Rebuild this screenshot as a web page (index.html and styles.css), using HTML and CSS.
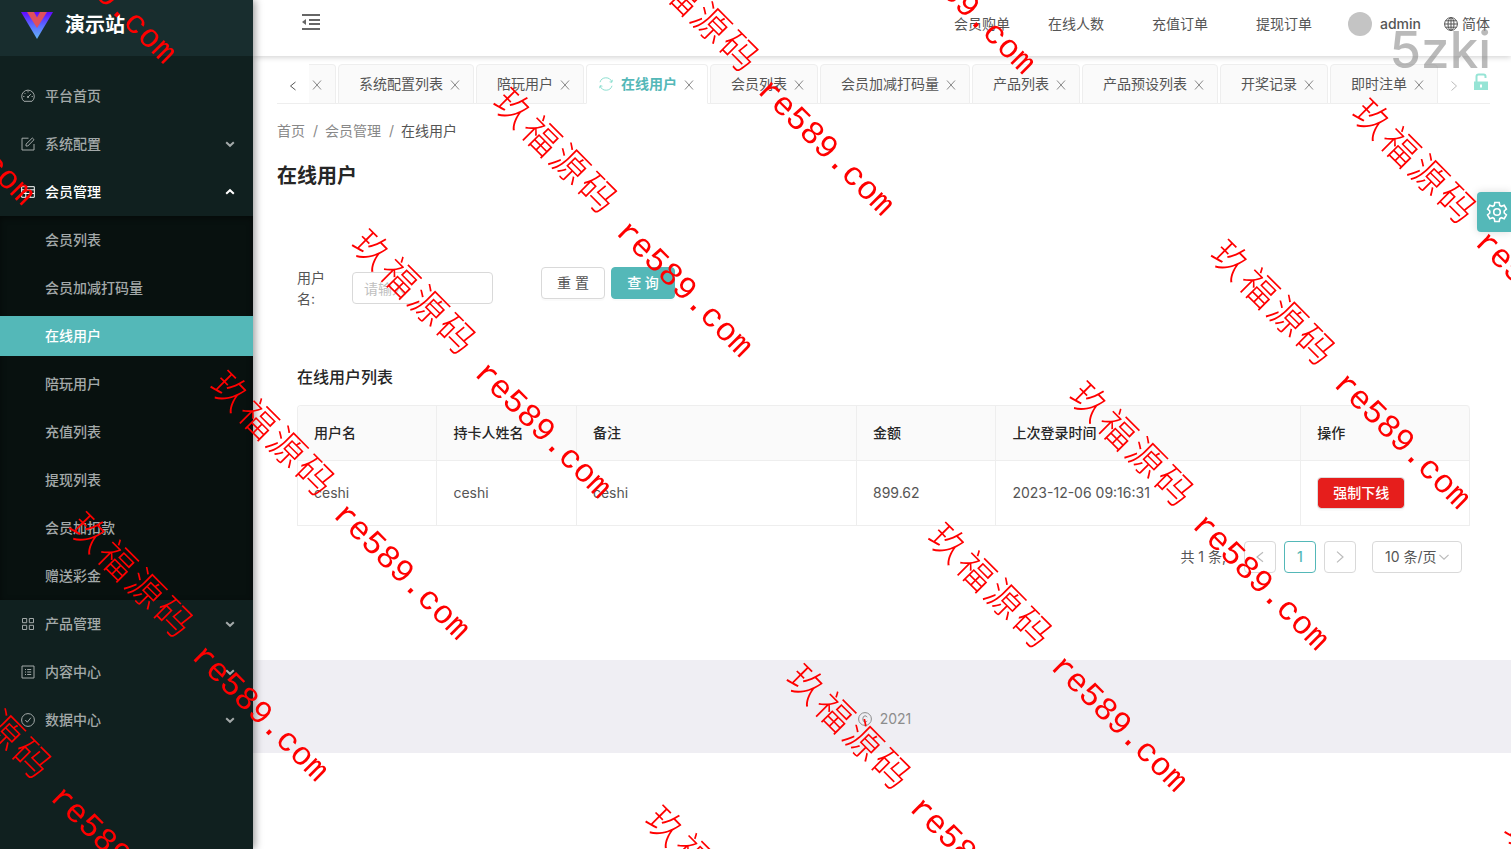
FILE: index.html
```html
<!DOCTYPE html>
<html lang="zh-CN">
<head>
    <meta charset="UTF-8">
    <meta name="viewport" content="width=device-width, initial-scale=1.0">
    <title>在线用户 - 演示站</title>
    <link rel="stylesheet" href="styles.css">
</head>
<body>
    <!-- Shared icons -->
    <svg class="icon-defs" width="0" height="0">
        <symbol id="i-close" viewBox="0 0 10 10"><path d="M1 .5l8 9M9 .5l-8 9"/></symbol>
        <symbol id="i-left" viewBox="0 0 10 10"><path d="M7.500 1L2.500 5l5 4"/></symbol>
        <symbol id="i-right" viewBox="0 0 10 10"><path d="M2.500 0.500L7.500 5l-5 4.500"/></symbol>
        <symbol id="i-down" viewBox="0 0 10 10"><path d="M1.200 3.200L5 6.800l3.800-3.600"/></symbol>
    </svg>

    <div class="layout">
        <!-- Sidebar -->
        <aside class="sidebar">
            <a class="logo" href="#">
                <svg class="logo-img" viewBox="0 0 32 32">
                    <defs>
                        <linearGradient id="lg" x1="0" y1="0" x2="0" y2="1">
                            <stop offset="0" stop-color="#6207ff"/>
                            <stop offset="0.5" stop-color="#5a6cff"/>
                            <stop offset="1" stop-color="#64b5f6"/>
                        </linearGradient>
                    </defs>
                    <path fill="url(#lg)" d="M0 3h32L16 30z"/>
                    <path fill="#e0505c" d="M6 3h7l3 5.500L19 3h7L16 19z"/>
                </svg>
                <span>演示站</span>
            </a>
            <nav>
                <ul class="menu">
                    <li><a class="menu-item" href="#">
                        <svg class="menu-icon" viewBox="0 0 14 14"><path d="M3 12.300a6.300 6.300 0 1 1 8 0zM7 8l2.800-2.800M7 2.200v1.200M2.200 7.500h1.200M10.600 7.500h1.200M3.500 4l.9.900"/><circle cx="7" cy="8" r=".7"/></svg>
                        <span>平台首页</span></a></li>
                    <li><a class="menu-item" href="#">
                        <svg class="menu-icon" viewBox="0 0 14 14"><path d="M7.500 1.200H1v11.800h12V7M5 9V7.200L11.300 1l1.700 1.700L6.800 9z"/></svg>
                        <span>系统配置</span>
                        <svg class="arrow" viewBox="0 0 10 10"><use href="#i-down"/></svg></a></li>
                    <li><a class="menu-item open" href="#">
                        <svg class="menu-icon" viewBox="0 0 14 14"><path d="M.7 1.700h12.600v10.600H.7zM.7 4.800h12.600M.7 8.500h12.600M4.800 4.800v7.500M9.200 4.800v7.500"/></svg>
                        <span>会员管理</span>
                        <svg class="arrow up" viewBox="0 0 10 10"><use href="#i-down"/></svg></a>
                        <ul class="submenu">
                            <li><a class="menu-item" href="#">会员列表</a></li>
                            <li><a class="menu-item" href="#">会员加减打码量</a></li>
                            <li><a class="menu-item active" href="#">在线用户</a></li>
                            <li><a class="menu-item" href="#">陪玩用户</a></li>
                            <li><a class="menu-item" href="#">充值列表</a></li>
                            <li><a class="menu-item" href="#">提现列表</a></li>
                            <li><a class="menu-item" href="#">会员加扣款</a></li>
                            <li><a class="menu-item" href="#">赠送彩金</a></li>
                        </ul>
                    </li>
                    <li><a class="menu-item" href="#">
                        <svg class="menu-icon" viewBox="0 0 14 14"><path d="M1.500 1.500h4.200v4.200H1.500zM8.300 1.500h4.200v4.200H8.300zM1.500 8.300h4.200v4.200H1.500zM8.300 8.300h4.200v4.200H8.300z"/></svg>
                        <span>产品管理</span>
                        <svg class="arrow" viewBox="0 0 10 10"><use href="#i-down"/></svg></a></li>
                    <li><a class="menu-item" href="#">
                        <svg class="menu-icon" viewBox="0 0 14 14"><path d="M1 1h12v12H1zM4 4.500h1M6.200 4.500h4M4 7h1M6.200 7h4M4 9.500h1M6.200 9.500h4"/></svg>
                        <span>内容中心</span>
                        <svg class="arrow" viewBox="0 0 10 10"><use href="#i-down"/></svg></a></li>
                    <li><a class="menu-item" href="#">
                        <svg class="menu-icon" viewBox="0 0 14 14"><circle cx="7" cy="7" r="6.400"/><path d="M4.300 7l2 2.200 3.600-4.500"/></svg>
                        <span>数据中心</span>
                        <svg class="arrow" viewBox="0 0 10 10"><use href="#i-down"/></svg></a></li>
                </ul>
            </nav>
        </aside>

        <div class="main">
            <!-- Header -->
            <header class="header">
                <button class="icon-btn fold" type="button" aria-label="收起菜单">
                    <svg viewBox="0 0 18 16"><path d="M0 1h18M7 6h11M7 10h11M0 15h18"/><path class="solid" d="M0 8l4-3v6z"/></svg>
                </button>
                <nav class="header-links">
                    <a class="first" href="#">会员购单</a>
                    <a href="#">在线人数</a>
                    <a href="#">充值订单</a>
                    <a href="#">提现订单</a>
                </nav>
                <a class="user" href="#"><span class="avatar"></span>admin</a>
                <a class="lang" href="#">
                    <svg viewBox="0 0 14 14"><circle cx="7" cy="7" r="6.400"/><ellipse cx="7" cy="7" rx="3" ry="6.400"/><path d="M7 .6v12.800M.6 7h12.800M1.500 3.800h11M1.500 10.200h11"/></svg>
                    简体
                </a>
                <span class="mark">5zki</span>
            </header>

            <!-- Tabs -->
            <div class="tabs">
                <button class="tab-nav" type="button" aria-label="向左"><svg viewBox="0 0 10 10"><use href="#i-left"/></svg></button>
                <ul class="tab-list">
                    <li class="tab cut"><button type="button" aria-label="关闭"><svg viewBox="0 0 10 10"><use href="#i-close"/></svg></button></li>
                    <li class="tab"><a href="#">系统配置列表</a><button type="button" aria-label="关闭"><svg viewBox="0 0 10 10"><use href="#i-close"/></svg></button></li>
                    <li class="tab"><a href="#">陪玩用户</a><button type="button" aria-label="关闭"><svg viewBox="0 0 10 10"><use href="#i-close"/></svg></button></li>
                    <li class="tab active">
                        <svg class="reload" viewBox="0 0 14 14"><path d="M1 5.200A6.200 6.200 0 0 1 12.800 5M13 8.800A6.200 6.200 0 0 1 1.200 9M13.300 2.800L12.900 5.300l-2.300-.5M.7 11.200l.4-2.500 2.300.5"/></svg>
                        <a href="#">在线用户</a><button type="button" aria-label="关闭"><svg viewBox="0 0 10 10"><use href="#i-close"/></svg></button></li>
                    <li class="tab"><a href="#">会员列表</a><button type="button" aria-label="关闭"><svg viewBox="0 0 10 10"><use href="#i-close"/></svg></button></li>
                    <li class="tab"><a href="#">会员加减打码量</a><button type="button" aria-label="关闭"><svg viewBox="0 0 10 10"><use href="#i-close"/></svg></button></li>
                    <li class="tab"><a href="#">产品列表</a><button type="button" aria-label="关闭"><svg viewBox="0 0 10 10"><use href="#i-close"/></svg></button></li>
                    <li class="tab"><a href="#">产品预设列表</a><button type="button" aria-label="关闭"><svg viewBox="0 0 10 10"><use href="#i-close"/></svg></button></li>
                    <li class="tab"><a href="#">开奖记录</a><button type="button" aria-label="关闭"><svg viewBox="0 0 10 10"><use href="#i-close"/></svg></button></li>
                    <li class="tab"><a href="#">即时注单</a><button type="button" aria-label="关闭"><svg viewBox="0 0 10 10"><use href="#i-close"/></svg></button></li>
                </ul>
                <button class="tab-nav off" type="button" aria-label="向右"><svg viewBox="0 0 10 10"><use href="#i-right"/></svg></button>
                <button class="icon-btn lock" type="button" aria-label="锁定">
                    <svg viewBox="0 0 16 18"><path class="solid" d="M1 8.500h14v8.500H1z"/><path d="M3.500 9V3.500q0-2 2-2h5q2 0 2 2v1.500"/><path class="hole" d="M8 11.500v3"/></svg>
                </button>
            </div>

            <!-- Page title -->
            <div class="page-head">
                <ol class="breadcrumb">
                    <li><a href="#">首页</a></li>
                    <li><a href="#">会员管理</a></li>
                    <li>在线用户</li>
                </ol>
                <h1>在线用户</h1>
            </div>

            <div class="content">
                <form class="search">
                    <label for="username">用户名:</label>
                    <input id="username" type="text" placeholder="请输入">
                    <div class="search-btns">
                        <button class="btn" type="reset">重 置</button>
                        <button class="btn primary" type="button">查 询</button>
                    </div>
                </form>

                <h2>在线用户列表</h2>
                <table>
                    <thead>
                        <tr>
                            <th class="col-sm">用户名</th>
                            <th class="col-sm">持卡人姓名</th>
                            <th class="col-md">备注</th>
                            <th class="col-sm">金额</th>
                            <th class="col-lg">上次登录时间</th>
                            <th>操作</th>
                        </tr>
                    </thead>
                    <tbody>
                        <tr>
                            <td>ceshi</td>
                            <td>ceshi</td>
                            <td>ceshi</td>
                            <td>899.62</td>
                            <td>2023-12-06 09:16:31</td>
                            <td><button class="btn danger" type="button">强制下线</button></td>
                        </tr>
                    </tbody>
                </table>

                <div class="pagination">
                    <span class="total">共 1 条,</span>
                    <button class="page off" type="button" aria-label="上一页"><svg viewBox="0 0 10 10"><use href="#i-left"/></svg></button>
                    <button class="page current" type="button">1</button>
                    <button class="page off" type="button" aria-label="下一页"><svg viewBox="0 0 10 10"><use href="#i-right"/></svg></button>
                    <div class="page-size">
                        <select aria-label="每页条数"><option>10 条/页</option></select>
                        <svg viewBox="0 0 10 10"><use href="#i-down"/></svg>
                    </div>
                </div>
            </div>

            <footer class="footer">
                <svg viewBox="0 0 14 14"><circle cx="7" cy="7" r="6.400"/><path d="M9.200 5.200Q8.500 3.800 7 3.800 4.800 4 4.800 7T7 10.200q1.500 0 2.200-1.400"/></svg>
                <span>2021</span>
            </footer>
        </div>
    </div>

    <button class="setting" type="button" aria-label="设置">
        <svg viewBox="0 0 22 22"><path d="M8.800 1.500h4.400l.6 2.900 1.600.9 2.800-1 2.200 3.800-2.200 1.900v2l2.200 1.900-2.200 3.800-2.800-1-1.600.9-.6 2.900H8.800l-.6-2.900-1.600-.9-2.800 1-2.200-3.800L3.800 12v-2L1.600 8.100l2.200-3.800 2.800 1 1.600-.9z"/><circle cx="11" cy="11" r="3.300"/></svg>
    </button>

    <div class="watermark"><div class="watermark-grid" id="watermark-grid"></div></div>

    <script>
        const grid = document.getElementById('watermark-grid');

        // 9 rows x 4 columns, the whole grid is rotated in css
        for (let i = 0; i < 36; i++) {
            const p = document.createElement('p');
            p.innerHTML = '<b>玖</b><b>福</b><b>源</b><b>码</b><span>re589.com</span>';
            grid.appendChild(p);
        }
    </script>
</body>
</html>
```
FILE: styles.css
```css
* {
    margin: 0;
    padding: 0;
    box-sizing: border-box;
}

body {
    font-family: Inter, "Noto Sans CJK SC", sans-serif;
    font-size: 14px;
    line-height: 22px;
    color: #555;
    background: #fff;
}

ul, ol {
    list-style: none;
}

a {
    color: inherit;
    text-decoration: none;
}

button, input, select {
    font: inherit;
    color: inherit;
}

button {
    border: none;
    background: none;
    cursor: pointer;
}

svg {
    display: block;
    fill: none;
    stroke: currentColor;
}

.solid {
    fill: currentColor;
    stroke: none;
}

.icon-defs {
    position: absolute;
}

.layout {
    display: flex;
    min-height: 100vh;
}

/* Sidebar */
.sidebar {
    flex: 0 0 253px;
    background: #10201f;
    color: #a3a9a9;
    font-weight: 500;
    box-shadow: 2px 0 8px rgba(0,0,0,0.4);
    z-index: 2;
}

.logo {
    display: flex;
    align-items: center;
    gap: 12px;
    height: 56px;
    padding: 0 21px 6px;
    background: #182d2e;
    color: #fff;
    font-size: 20px;
    font-weight: 600;
}

.logo-img {
    width: 32px;
    height: 32px;
    stroke: none;
}

.menu {
    padding-top: 16px;
}

.menu li {
    padding: 4px 0;
}

.menu-item {
    display: flex;
    align-items: center;
    gap: 10px;
    height: 40px;
    padding: 0 18px 0 21px;
}

.menu-item.open {
    color: #fff;
}

.menu-icon {
    width: 14px;
    height: 14px;
}

.arrow {
    width: 10px;
    height: 10px;
    margin-left: auto;
    stroke-width: 2;
}

.arrow.up {
    transform: rotate(180deg);
}

.submenu {
    margin: 4px 0 -4px;
    background: #08110f;
    box-shadow: inset 0 2px 6px rgba(0,0,0,0.45);
}

.submenu .menu-item {
    padding-left: 45px;
}

.submenu .active {
    background: #54b8b8;
    color: #fff;
}

/* Header */
.main {
    flex: 1;
    min-width: 0;
}

.header {
    position: relative;
    display: flex;
    align-items: center;
    height: 56px;
    padding: 0 21px 8px 49px;
    box-shadow: 0 1px 6px rgba(0,0,0,0.2);
}

.fold {
    margin-right: auto;
    padding-bottom: 4px;
    color: #666;
}

.fold svg {
    width: 18px;
    height: 16px;
    stroke-width: 2;
}

.header-links {
    display: flex;
    gap: 48px;
    margin-right: 36px;
}

.header-links .first {
    margin-right: -10px;
}

.user, .lang {
    display: flex;
    align-items: center;
    gap: 8px;
    font-weight: 500;
}

.avatar {
    width: 24px;
    height: 24px;
    border-radius: 50%;
    background: #c4c4c4;
}

.lang {
    gap: 4px;
    margin-left: 23px;
    font-weight: 400;
}

.lang svg {
    width: 14px;
    height: 14px;
}

.mark {
    position: absolute;
    right: 20px;
    top: 18px;
    font-size: 51px;
    font-weight: 500;
    line-height: 64px;
    color: rgba(130,130,130,0.55);
    pointer-events: none;
}

/* Tabs */
.tabs {
    display: flex;
    margin: 8px 21px 0 24px;
    height: 40px;
    border-bottom: 1px solid #eee;
}

.tab-nav {
    flex: 0 0 32px;
    display: flex;
    align-items: center;
    justify-content: center;
    padding-top: 4px;
}

.tab-nav svg, .tab button svg {
    width: 10px;
    height: 10px;
}

.off {
    color: #bbb;
}

.tab-list {
    flex: 1;
    min-width: 0;
    display: flex;
    justify-content: flex-end;
    gap: 2px;
    overflow: hidden;
    margin-bottom: -1px;
}

.tab {
    flex: none;
    display: flex;
    align-items: center;
    gap: 7px;
    padding: 0 13px 0 20px;
    border: 1px solid #eee;
    border-radius: 4px 4px 0 0;
    background: #fafafa;
}

.tab button {
    padding-top: 2px;
    color: #888;
}

.tab.cut {
    padding-left: 3px;
    border-left: none;
    border-top-left-radius: 0;
}

.tab.active {
    padding-left: 12px;
    border-bottom-color: #fff;
    background: #fff;
    color: #54b8b8;
    font-weight: 600;
}

.reload {
    width: 14px;
    height: 14px;
    margin-right: 1px;
    color: #8ddfd0;
}

.lock {
    color: #96e4d5;
    padding: 0 1px 4px 3px;
}

.lock svg {
    width: 16px;
    height: 18px;
    stroke-width: 2;
}

.lock .hole {
    stroke: #fff;
}

/* Page head */
.page-head {
    padding: 16px 24px;
}

.breadcrumb {
    display: flex;
    color: #555;
}

.breadcrumb a {
    color: #888;
}

.breadcrumb li + li::before {
    content: "/";
    padding: 0 7px 0 8px;
    color: #888;
}

h1 {
    margin-top: 18px;
    font-size: 20px;
    font-weight: 600;
    line-height: 32px;
    color: #262626;
}

.content {
    padding: 0 41px 0 44px;
}

/* Search form */
.search {
    display: flex;
    align-items: center;
    padding: 59px 0 56px;
}

.search label {
    width: 40px;
    margin-right: 15px;
    line-height: 21px;
}

.search input {
    width: 141px;
    height: 32px;
    padding: 0 11px;
    border: 1px solid #d9d9d9;
    border-radius: 4px;
    outline: none;
}

.search input::placeholder {
    color: #bfbfbf;
}

.search-btns {
    display: flex;
    gap: 6px;
    margin-left: 48px;
    padding-bottom: 10px;
}

.btn {
    height: 32px;
    min-width: 64px;
    padding: 0 15px;
    border: 1px solid #d9d9d9;
    border-radius: 4px;
    background: #fff;
    line-height: 30px;
    box-shadow: 0 2px 0 rgba(0,0,0,0.02);
}

.btn.primary {
    border-color: #54b8b8;
    background: #54b8b8;
    color: #fff;
    font-weight: 500;
}

.btn.danger {
    border-color: #ddd;
    background: #e61e1c;
    background-clip: padding-box;
    color: #fff;
    font-weight: 500;
}

/* Table */
h2 {
    margin-bottom: 16px;
    font-size: 16px;
    font-weight: 500;
    line-height: 24px;
    color: #262626;
}

table {
    width: 100%;
    table-layout: fixed;
    border-collapse: separate;
    border-spacing: 0;
    border: 1px solid #eee;
    border-width: 1px 0 0 1px;
    border-radius: 4px 4px 0 0;
}

th, td {
    padding: 16px;
    border: 1px solid #eee;
    border-width: 0 1px 1px 0;
    text-align: left;
}

th {
    background: #fafafa;
    color: #262626;
    font-weight: 500;
}

th:first-child {
    border-top-left-radius: 4px;
}

th:last-child {
    border-top-right-radius: 4px;
}

.col-sm {
    width: 11.9%;
}

.col-md {
    width: 23.9%;
}

.col-lg {
    width: 26%;
}

/* Pagination */
.pagination {
    display: flex;
    align-items: center;
    justify-content: flex-end;
    gap: 8px;
    padding: 15px 8px 87px;
}

.total {
    margin-right: 10px;
}

.page {
    display: flex;
    align-items: center;
    justify-content: center;
    width: 32px;
    height: 32px;
    border: 1px solid #d9d9d9;
    border-radius: 4px;
}

.page svg {
    width: 12px;
    height: 12px;
}

.page.current {
    border-color: #54b8b8;
    color: #54b8b8;
    font-weight: 500;
}

.page-size {
    position: relative;
    margin-left: 8px;
}

.page-size select {
    width: 90px;
    height: 32px;
    padding: 0 12px;
    border: 1px solid #d9d9d9;
    border-radius: 4px;
    background: #fff;
    appearance: none;
}

.page-size svg {
    position: absolute;
    right: 12px;
    top: 10px;
    width: 12px;
    height: 12px;
    color: #bbb;
    pointer-events: none;
}

/* Footer */
.footer {
    display: flex;
    align-items: center;
    justify-content: center;
    gap: 8px;
    height: 93px;
    padding: 24px 0 0 5px;
    background: #efeef3;
    color: #8c8c8c;
}

.footer svg {
    width: 14px;
    height: 14px;
}

.setting {
    position: fixed;
    right: 0;
    top: 192px;
    width: 34px;
    height: 40px;
    padding-left: 9px;
    border-radius: 4px 0 0 4px;
    background: #54b8b8;
    color: #fff;
    box-shadow: 0 0 8px rgba(0,0,0,0.15);
}

.setting svg {
    width: 22px;
    height: 22px;
    stroke-width: 1.6;
}

/* Watermark */
.watermark {
    position: fixed;
    inset: 0;
    overflow: hidden;
    pointer-events: none;
    z-index: 10;
}

.watermark-grid {
    position: absolute;
    left: 0;
    top: 0;
    display: grid;
    grid-template-columns: repeat(4, 615px);
    grid-auto-rows: 200px;
    transform-origin: 0 0;
    transform: rotate(45deg) translate(-196px, -1109px);
}

.watermark p {
    display: flex;
    height: 40px;
    font-family: "Noto Sans CJK SC", sans-serif;
    font-size: 37px;
    line-height: 40px;
    color: #f00;
    white-space: nowrap;
}

.watermark b {
    width: 40px;
    font-weight: 300;
    text-align: center;
}

.watermark span {
    margin-left: 20px;
    font-family: "Liberation Mono", monospace;
    font-size: 33px;
    line-height: 62px;
}
```
